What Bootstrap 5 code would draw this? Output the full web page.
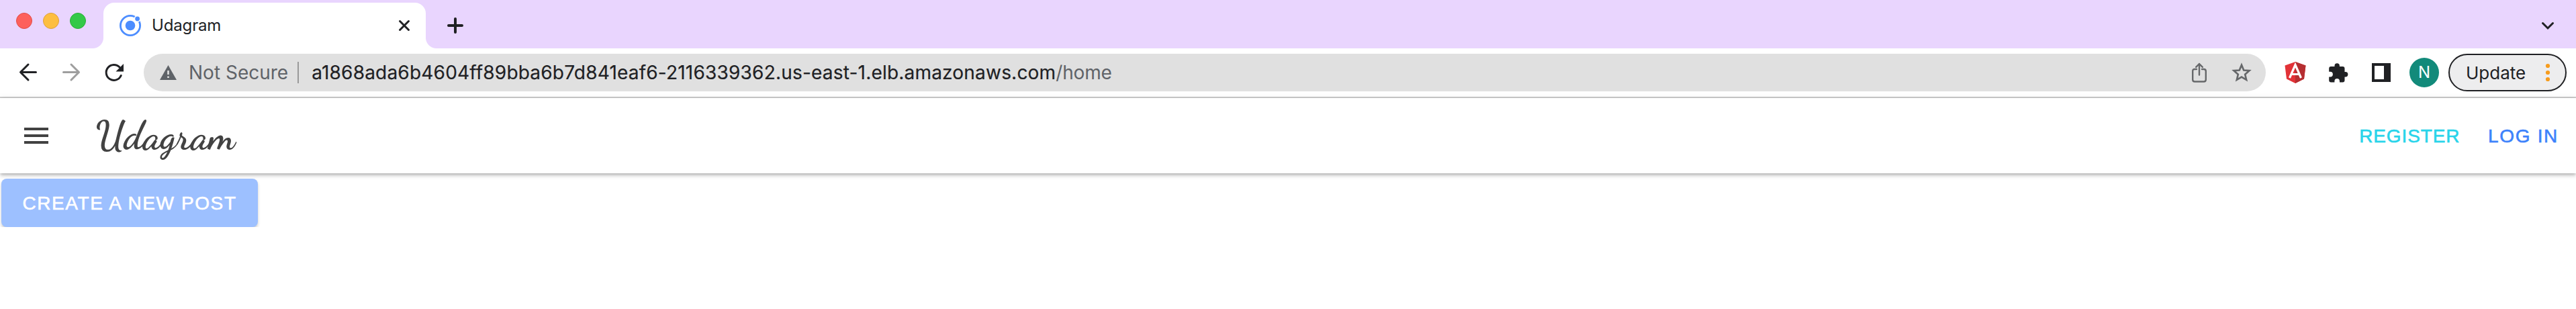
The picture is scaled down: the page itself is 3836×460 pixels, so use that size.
<!DOCTYPE html>
<html lang="en"><head><meta charset="utf-8"><title>Udagram</title>
<link href="https://cdn.jsdelivr.net/npm/bootstrap@5.3.0/dist/css/bootstrap.min.css" rel="stylesheet">
<script src="https://cdn.jsdelivr.net/npm/bootstrap@5.3.0/dist/js/bootstrap.bundle.min.js"></script>
<style>
body{font-family:Inter,"Liberation Sans",sans-serif;color:#202124;background:#fff;overflow:hidden}
svg{display:block;flex:none;overflow:visible}
.tabstrip{height:72px;background:#e9d5fe;padding:4px 34px 0 24px}
.lights{gap:16px;padding-top:15px;width:130px}
.light{width:24px;height:24px;border-radius:50%;border:1px solid}
.light-red{background:#fd605c;border-color:#e24b47}
.light-yellow{background:#fdbe40;border-color:#dea03a}
.light-green{background:#33c948;border-color:#29ae37}
.tab-active{position:relative;width:480px;height:68px;background:#fff;border-radius:16px 16px 0 0;padding:0 24px}
.tab-active:before,.tab-active:after{content:"";position:absolute;bottom:0;width:16px;height:16px}
.tab-active:before{left:-16px;background:radial-gradient(circle at 0 0,transparent 15.5px,#fff 16.5px)}
.tab-active:after{right:-16px;background:radial-gradient(circle at 100% 0,transparent 15.5px,#fff 16.5px)}
.tab-title{font-size:24px;margin-left:16px;letter-spacing:-.15px}
.new-tab{margin:22px 0 0 32px}
.chevron{margin:30px 0 0 auto}
.toolbar{height:74px;padding:0 14px 0 28px;border-bottom:2px solid #ccc}
.nav-icons{width:186px;gap:36px}
.address{height:56px;border-radius:28px;background:#e0e0e0;font-size:28px;padding:0 20px 0 24px;width:3160px}
.warn{margin-right:18px}
.sep{width:2px;height:32px;background:#999;margin:0 19px 0 14px}
.url{letter-spacing:.2px;-webkit-text-stroke:.2px currentColor}
.url .muted{letter-spacing:-.2px;-webkit-text-stroke:0}
.muted{color:#5f6368}
.star{margin-left:36px}
.ext-angular{margin-left:28px}
.ext-puzzle{margin-left:34px}
.ext-panel{margin-left:35px}
.avatar{width:44px;height:44px;border-radius:50%;background:#128a7a;color:#fff;font-size:24px;margin:0 14px 0 28px}
.update{width:176px;height:56px;border:2px solid #202124;border-radius:28px;background:#ededee;font-size:26px;padding:0 23px 0 24px}
.app-header{height:112px;box-shadow:0 2px 4px -1px rgba(0,0,0,.2),0 4px 5px rgba(0,0,0,.12),0 1px 10px rgba(0,0,0,.1);padding:0 26px 0 36px;font-family:"Liberation Sans",sans-serif}
.brand{font:700 59px "Dancing Script","Liberation Serif",cursive;color:#424242;margin-left:70px;line-height:1}
.action{font-size:28px;line-height:1;padding-top:1px;-webkit-text-stroke:.6px currentColor}
.action-register{color:#28d4ea;letter-spacing:.9px;margin-right:41.500px}
.action-login{color:#3d82fb;letter-spacing:1.68px}
.create{width:382px;height:72px;margin:8px 0 0 2px;padding:1px 0 0;border:0;border-radius:8px;background:#9dc0ff;color:#fff;font:28px "Liberation Sans",sans-serif;letter-spacing:1.6px;-webkit-text-stroke:.6px #fff;box-shadow:0 3px 4px rgba(0,0,0,.2)}
.create:hover{background:#9dc0ff;color:#fff}
</style></head><body>
<div class="tabstrip d-flex">
  <div class="lights d-flex"><span class="light light-red"></span><span class="light light-yellow"></span><span class="light light-green"></span></div>
  <div class="tab-active d-flex align-items-center">
    <svg width="32" height="32" viewBox="0 0 32 32"><circle cx="16" cy="16" r="14.6" fill="none" stroke="#4c8dff" stroke-width="2.8"/><circle cx="16" cy="16" r="7.3" fill="#4c8dff"/><circle cx="26.6" cy="6" r="5" fill="#fff"/><circle cx="26.6" cy="6" r="3.4" fill="#4c8dff"/></svg>
    <span class="tab-title">Udagram</span>
    <svg class="ms-auto" width="16" height="16" viewBox="0 0 16 16" stroke="#202124" stroke-width="3" stroke-linecap="round"><path d="M1.5 1.5l13 13M14.5 1.5l-13 13"/></svg>
  </div>
  <svg class="new-tab" width="24" height="24" viewBox="0 0 24 24" stroke="#202124" stroke-width="4" stroke-linecap="round"><path d="M12 2v20M2 12h20"/></svg>
  <svg class="chevron" width="16" height="10" viewBox="0 0 16 10" fill="none" stroke="#202124" stroke-width="3" stroke-linecap="round"><path d="M.5 .5L8 8l7.500-7.500"/></svg>
</div>
<div class="toolbar d-flex align-items-center">
  <div class="nav-icons d-flex align-items-center">
    <svg width="28" height="28" viewBox="0 0 28 28" fill="none" stroke="#202124" stroke-width="3" stroke-linecap="round" stroke-linejoin="round"><path d="M25.500 13.500H2.800M14 2L2.500 13.500 14 25"/></svg>
    <svg width="28" height="28" viewBox="0 0 28 28" fill="none" stroke="#9e9e9e" stroke-width="3" stroke-linecap="round" stroke-linejoin="round"><path d="M2.500 13.500h23M14 2l11.500 11.500L14 25"/></svg>
    <svg width="28" height="28" viewBox="0 0 28 28"><path d="M24.200 18.500A11.500 11.500 0 1 1 22 6" fill="none" stroke="#202124" stroke-width="3" stroke-linecap="round"/><path d="M28 1v11.500H16.500z" fill="#202124"/></svg>
  </div>
  <div class="address d-flex align-items-center">
    <svg class="warn" width="25" height="22" viewBox="0 0 25 22"><path d="M12.500 0L25 22H0z" fill="#5f6368"/><path d="M11.200 8h2.600v6h-2.600zM11.200 16.500h2.600V19h-2.600z" fill="#e0e0e0"/></svg>
    <span class="muted">Not Secure</span><span class="sep"></span>
    <span class="url">a1868ada6b4604ff89bba6b7d841eaf6-2116339362.us-east-1.elb.amazonaws.com<span class="muted">/home</span></span>
    <svg class="ms-auto" width="22" height="30" viewBox="0 0 22 30" fill="none" stroke="#66686a" stroke-width="2.4" stroke-linecap="round"><path d="M7 10H4.200Q1.200 10 1.200 13v12.500q0 3 3 3h13.600q3 0 3-3V13q0-3-3-3H15"/><path d="M11 18.500V2M6.200 6.800L11 2l4.800 4.800" stroke-linejoin="round"/></svg>
    <svg class="star" width="32" height="30" viewBox="0 0 32 30"><path d="M16 3.800l3.200 7.700 8.300.7-6.300 5.500 1.900 8.100-7.100-4.300-7.100 4.300 1.900-8.100-6.300-5.500 8.300-.7z" fill="none" stroke="#66686a" stroke-width="2.700"/></svg>
  </div>
  <svg class="ext-angular" width="32" height="32" viewBox="0 0 32 32"><path d="M16 0L31.500 5.500 29 25.500 16 32 3 25.500.5 5.500z" fill="#e23237"/><path d="M16 0l15.500 5.500L29 25.500 16 32z" fill="#b52e31"/><path d="M7.500 24L16 4.500 24.500 24M11 18.500h10" fill="none" stroke="#fff" stroke-width="3.200"/></svg>
  <svg class="ext-puzzle" width="29" height="29" viewBox="0 0 29 29"><path d="M3 5h5.500V4a3.700 3.700 0 0 1 7.400 0v1h4.600q3 0 3 3v5h1.200a3.700 3.700 0 0 1 0 7.400h-1.200V25.500q0 3-3 3H16v-1.600a3.800 3.800 0 0 0-7.600 0v1.600H3.200q-3 0-3-3V20.500H2a3.900 3.900 0 0 0 0-7.800H.2V8q0-3 2.800-3z" fill="#202124"/></svg>
  <svg class="ext-panel" width="28" height="28" viewBox="0 0 28 28"><path d="M0 0h28v28H0z" fill="#202124"/><path d="M4 4h14v20H4z" fill="#fff"/></svg>
  <span class="avatar d-flex align-items-center justify-content-center">N</span>
  <div class="update d-flex align-items-center justify-content-between"><span>Update</span><svg width="6" height="26" viewBox="0 0 6 26" fill="#f79c1d"><circle cx="3" cy="3" r="3.100"/><circle cx="3" cy="13" r="3.100"/><circle cx="3" cy="23" r="3.100"/></svg></div>
</div>
<header class="app-header d-flex align-items-center">
  <svg width="36" height="24" viewBox="0 0 36 24" fill="#424242"><path d="M0 0h36v4H0zM0 10h36v4H0zM0 20h36v4H0z"/></svg>
  <span class="brand">Udagram</span>
  <span class="action action-register ms-auto">REGISTER</span><span class="action action-login">LOG IN</span>
</header>
<button class="create btn">CREATE A NEW POST</button>
</body></html>
